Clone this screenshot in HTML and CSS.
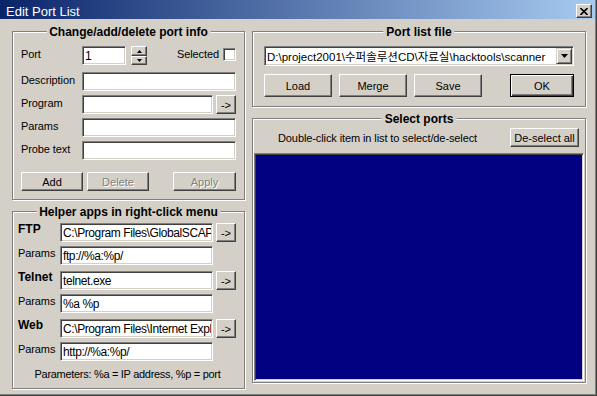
FILE: index.html
```html
<!DOCTYPE html>
<html lang="en">
<head>
  <meta charset="UTF-8" />
  <title>Edit Port List</title>
  <link rel="stylesheet" href="styles.css">
</head>
<body>
  <div class="window">
    <div class="titlebar">
      <span class="title">Edit Port List</span>
      <button class="close-btn" aria-label="Close">
        <svg width="8" height="7" viewBox="0 0 8 7"><path d="M0.5 0 L7.5 7 M7.5 0 L0.5 7" stroke="#000" stroke-width="1.6" fill="none"/></svg>
      </button>
    </div>

    <div class="panes">
      <div class="col">
        <div class="group group-port">
          <span class="group-title">Change/add/delete port info</span>
          <div class="port-form">
            <span class="lbl">Port</span>
            <div class="port-ctrl">
              <input class="field field-port" type="text" value="1">
              <div class="spin">
                <button class="spin-btn"><svg width="5" height="3" viewBox="0 0 5 3"><path d="M2.5 0 L5 3 L0 3 Z" fill="#000"/></svg></button>
                <button class="spin-btn"><svg width="5" height="3" viewBox="0 0 5 3"><path d="M0 0 L5 0 L2.5 3 Z" fill="#000"/></svg></button>
              </div>
              <span class="lbl selected-lbl">Selected</span>
              <input class="check" type="checkbox">
            </div>

            <span class="lbl">Description</span>
            <input class="field" type="text" value="">

            <span class="lbl">Program</span>
            <div class="with-btn">
              <input class="field" type="text" value="">
              <button class="btn btn-arrow">-&gt;</button>
            </div>

            <span class="lbl">Params</span>
            <input class="field" type="text" value="">

            <span class="lbl">Probe text</span>
            <input class="field" type="text" value="">

            <div class="btn-row">
              <button class="btn btn-edit">Add</button>
              <button class="btn btn-edit btn-delete" disabled>Delete</button>
              <button class="btn btn-edit btn-apply" disabled>Apply</button>
            </div>
          </div>
        </div>

        <div class="group group-helper">
          <span class="group-title">Helper apps in right-click menu</span>
          <div class="app">
            <span class="app-name">FTP</span>
            <div class="with-btn">
              <input class="field" type="text" value="C:\Program Files\GlobalSCAPE\CuteFTP\cutftp32.exe">
              <button class="btn btn-arrow">-&gt;</button>
            </div>
            <span class="lbl app-lbl">Params</span>
            <input class="field field-params" type="text" value="ftp://%a:%p/">
          </div>
          <div class="app">
            <span class="app-name">Telnet</span>
            <div class="with-btn">
              <input class="field" type="text" value="telnet.exe">
              <button class="btn btn-arrow">-&gt;</button>
            </div>
            <span class="lbl app-lbl">Params</span>
            <input class="field field-params" type="text" value="%a %p">
          </div>
          <div class="app">
            <span class="app-name">Web</span>
            <div class="with-btn">
              <input class="field" type="text" value="C:\Program Files\Internet Explorer\iexplore.exe">
              <button class="btn btn-arrow">-&gt;</button>
            </div>
            <span class="lbl app-lbl">Params</span>
            <input class="field field-params" type="text" value="http://%a:%p/">
          </div>
          <div class="helper-note">Parameters: %a = IP address, %p = port</div>
        </div>
      </div>

      <div class="col">
        <div class="group group-file">
          <span class="group-title">Port list file</span>
          <div class="combo">
            <span class="combo-text">D:\project2001\수퍼솔루션CD\자료실\hacktools\scanner</span>
            <span class="combo-btn"><svg width="7" height="4" viewBox="0 0 7 4"><path d="M0 0 L7 0 L3.5 4 Z" fill="#000"/></svg></span>
          </div>
          <div class="file-btns">
            <button class="btn btn-file">Load</button>
            <button class="btn btn-file">Merge</button>
            <button class="btn btn-file">Save</button>
            <button class="btn btn-file btn-ok">OK</button>
          </div>
        </div>

        <div class="group group-select">
          <span class="group-title">Select ports</span>
          <div class="select-head">
            <span>Double-click item in list to select/de-select</span>
            <button class="btn btn-deselect">De-select all</button>
          </div>
          <div class="port-list"></div>
        </div>
      </div>
    </div>
  </div>
</body>
</html>
```

FILE: styles.css
```css
body {
  margin: 0;
  background: #d4d0c8;
  font-family: "Liberation Sans", "Noto Sans CJK KR", Arial, sans-serif;
  font-size: 11px;
  letter-spacing: -0.1px;
  color: #000;
}
.window {
  width: 597px;
  height: 396px;
  box-sizing: border-box;
  background: #d4d0c8;
  border-right: 1px solid #404040;
  border-bottom: 1px solid #404040;
  box-shadow: inset -1px -1px 0 #808080;
}
.titlebar {
  height: 19px;
  box-sizing: border-box;
  margin-right: 1px;
  padding: 3px 3px 0 6px;
  display: flex;
  align-items: center;
  justify-content: space-between;
  background: linear-gradient(to right, #0a246a, #a6caf0);
  color: #fff;
  font-size: 13px;
  letter-spacing: 0;
}
.close-btn {
  width: 16px;
  height: 14px;
  padding: 0;
  display: flex;
  align-items: center;
  justify-content: center;
  background: #d4d0c8;
  border: 1px solid;
  border-color: #fff #404040 #404040 #fff;
  box-shadow: inset -1px -1px 0 #808080;
  box-sizing: border-box;
}
.panes {
  display: grid;
  grid-template-columns: 233px 334px;
  column-gap: 7px;
  padding: 12px 0 0 12px;
}
.col {
  display: flex;
  flex-direction: column;
  gap: 11px;
}
.group {
  position: relative;
  box-sizing: border-box;
  border: 1px solid #808080;
  box-shadow: inset 1px 1px 0 #fff, 1px 1px 0 #fff;
}
.group-title {
  position: absolute;
  top: -7px;
  left: 50%;
  transform: translateX(-50%);
  padding: 0 3px;
  background: #d4d0c8;
  font-size: 12px;
  font-weight: bold;
  line-height: 14px;
  letter-spacing: 0;
  white-space: nowrap;
}
.group-port {
  height: 169px;
  padding: 14px 7px 0 8px;
}
.group-helper {
  height: 178px;
  padding: 11px 7px 0 5px;
}
.group-file {
  height: 76px;
  padding: 14px 10px 0 11px;
}
.group-select {
  height: 265px;
  padding: 9px 1px 0 1px;
}

/* inputs and buttons */
.field {
  width: 100%;
  height: 19px;
  box-sizing: border-box;
  margin: 0;
  padding: 0 1px 0 2px;
  border: 1px solid;
  border-color: #808080 #fff #fff #808080;
  box-shadow: inset 1px 1px 0 #404040, inset -1px -1px 0 #d4d0c8;
  background: #fff;
  font-family: "Liberation Sans", "Noto Sans CJK KR", Arial, sans-serif;
  font-size: 12px;
  letter-spacing: -0.4px;
  color: #000;
  outline: none;
}
.btn {
  height: 19px;
  box-sizing: border-box;
  margin: 0;
  padding: 0;
  background: #d4d0c8;
  border: 1px solid;
  border-color: #fff #404040 #404040 #fff;
  box-shadow: inset -1px -1px 0 #808080;
  font-family: "Liberation Sans", Arial, sans-serif;
  font-size: 11px;
  color: #000;
}
.btn:disabled {
  color: #808080;
  text-shadow: 1px 1px 0 #fff;
}
.lbl {
  line-height: 16px;
  white-space: nowrap;
}

/* port info form */
.port-form {
  display: grid;
  grid-template-columns: 61px 154px;
  row-gap: 4px;
  align-items: start;
}
.port-ctrl {
  display: flex;
  align-items: flex-start;
  margin-bottom: 3px;
}
.field-port {
  width: 44px;
}
.spin {
  display: flex;
  flex-direction: column;
  margin-left: 5px;
}
.spin-btn {
  width: 16px;
  height: 10px;
  padding: 0;
  display: flex;
  align-items: center;
  justify-content: center;
  background: #d4d0c8;
  border: 1px solid;
  border-color: #fff #404040 #404040 #fff;
  box-shadow: inset -1px -1px 0 #808080;
  box-sizing: border-box;
}
.spin-btn + .spin-btn {
  height: 9px;
}
.selected-lbl {
  margin-left: auto;
}
.check {
  appearance: none;
  width: 13px;
  height: 13px;
  margin: 2px 0 0 4px;
  box-sizing: border-box;
  border: 1px solid;
  border-color: #808080 #fff #fff #808080;
  box-shadow: inset 1px 1px 0 #404040, inset -1px -1px 0 #d4d0c8;
  background: #fff;
}
.with-btn {
  display: flex;
  gap: 3px;
}
.with-btn .field {
  width: auto;
  flex: 1;
  min-width: 0;
}
.btn-arrow {
  width: 20px;
  flex: none;
}
.btn-row {
  grid-column: 1 / -1;
  display: flex;
  margin-top: 8px;
}
.btn-edit {
  width: 62px;
}
.btn-delete {
  margin-left: 4px;
}
.btn-apply {
  width: 63px;
  margin-left: auto;
}

/* helper apps */
.app {
  display: grid;
  grid-template-columns: 42px 176px;
  row-gap: 4px;
  align-items: start;
}
.app + .app {
  margin-top: 6px;
}
.app-name {
  font-size: 12px;
  font-weight: bold;
  line-height: 12px;
  letter-spacing: 0;
}
.app-lbl {
  line-height: 14px;
}
.field-params {
  width: 153px;
}
.helper-note {
  margin-top: 5px;
  line-height: 16px;
  letter-spacing: -0.3px;
  text-align: center;
}

/* port list file */
.combo {
  display: flex;
  align-items: center;
  width: 310px;
  height: 20px;
  box-sizing: border-box;
  padding: 0 1px;
  border: 1px solid;
  border-color: #808080 #fff #fff #808080;
  box-shadow: inset 1px 1px 0 #404040, inset -1px -1px 0 #d4d0c8;
  background: #fff;
  font-size: 11.5px;
  letter-spacing: 0;
}
.combo-text {
  flex: 1;
  min-width: 0;
  white-space: nowrap;
  padding-left: 1px;
}
.combo-btn {
  flex: none;
  width: 16px;
  height: 16px;
  display: flex;
  align-items: center;
  justify-content: center;
  box-sizing: border-box;
  border: 1px solid;
  border-color: #d4d0c8 #404040 #404040 #d4d0c8;
  box-shadow: inset 1px 1px 0 #fff, inset -1px -1px 0 #808080;
  background: #d4d0c8;
}
.file-btns {
  display: flex;
  gap: 7px;
  width: 310px;
  margin-top: 8px;
}
.btn-file {
  width: 68px;
  height: 23px;
}
.btn-ok {
  width: 64px;
  margin-left: auto;
  border: 1px solid #000;
  box-shadow: inset 1px 1px 0 #fff, inset -1px -1px 0 #404040, inset -2px -2px 0 #808080;
}

/* select ports */
.select-head {
  display: flex;
  align-items: center;
  justify-content: space-between;
  height: 19px;
  padding: 0 5px 0 24px;
}
.btn-deselect {
  width: 69px;
}
.port-list {
  height: 228px;
  margin-top: 6px;
  box-sizing: border-box;
  border: 1px solid;
  border-color: #808080 #fff #fff #808080;
  box-shadow: inset 1px 1px 0 #404040, inset -1px -1px 0 #d4d0c8;
  background: #000080;
}
```
